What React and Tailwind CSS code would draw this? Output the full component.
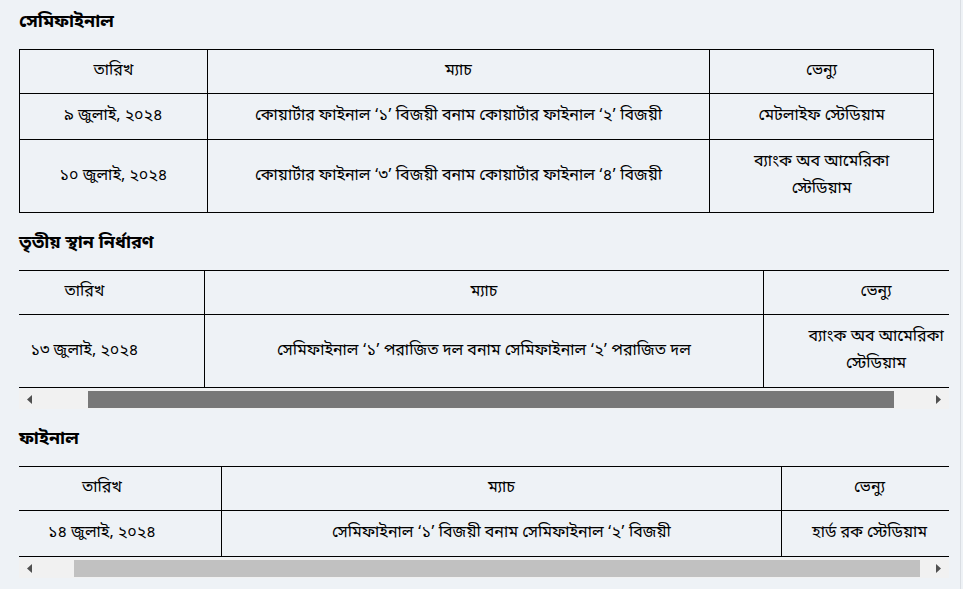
import { useCallback } from 'react';

const sections = [
  {
    title: 'সেমিফাইনাল',
    cols: [188, 503, 224],
    rows: [
      ['৯ জুলাই, ২০২৪', 'কোয়ার্টার ফাইনাল ‘১’ বিজয়ী বনাম কোয়ার্টার ফাইনাল ‘২’ বিজয়ী', 'মেটলাইফ স্টেডিয়াম'],
      ['১০ জুলাই, ২০২৪', 'কোয়ার্টার ফাইনাল ‘৩’ বিজয়ী বনাম কোয়ার্টার ফাইনাল ‘৪’ বিজয়ী', 'ব্যাংক অব আমেরিকা স্টেডিয়াম'],
    ],
  },
  {
    title: 'তৃতীয় স্থান নির্ধারণ',
    cols: [240, 560, 225],
    scroll: 55,
    thumb: 'bg-[#787878]',
    rows: [
      ['১৩ জুলাই, ২০২৪', 'সেমিফাইনাল ‘১’ পরাজিত দল বনাম সেমিফাইনাল ‘২’ পরাজিত দল', 'ব্যাংক অব আমেরিকা স্টেডিয়াম'],
    ],
  },
  {
    title: 'ফাইনাল',
    cols: [239, 561, 176],
    scroll: 37,
    thumb: 'bg-[#c1c1c1]',
    rows: [
      ['১৪ জুলাই, ২০২৪', 'সেমিফাইনাল ‘১’ বিজয়ী বনাম সেমিফাইনাল ‘২’ বিজয়ী', 'হার্ড রক স্টেডিয়াম'],
    ],
  },
];

const VIEW = 930;
const ARROW = 21;

function Scrollbar({ content, scroll, thumb }) {
  const track = VIEW - ARROW * 2;
  const width = Math.round((track * VIEW) / content);
  const left = Math.round((scroll / content) * track);
  return (
    <div className="flex h-[20px] bg-[#f1f1f1]">
      <div className="flex w-[21px] items-center justify-center">
        <svg width="5" height="9" viewBox="0 0 5 9"><polygon points="5,0 0,4.5 5,9" fill="#505050" /></svg>
      </div>
      <div className="flex-1 pt-[2px]">
        <div className={`h-[17px] ${thumb}`} style={{ marginLeft: left, width }} />
      </div>
      <div className="flex w-[21px] items-center justify-center">
        <svg width="5" height="9" viewBox="0 0 5 9"><polygon points="0,0 5,4.5 0,9" fill="#505050" /></svg>
      </div>
    </div>
  );
}

function Section({ s, first }) {
  const total = s.cols.reduce((a, b) => a + b, 0);
  const setScroll = useCallback((el) => {
    if (el && s.scroll) el.scrollLeft = s.scroll;
  }, [s.scroll]);

  return (
    <section>
      <h2 className={`${first ? 'pt-[8px] pb-[13px]' : 'pt-[16px] pb-[13px]'} text-[18px] font-bold leading-[28px] text-black`}>
        {s.title}
      </h2>
      <div ref={setScroll} className={s.scroll ? 'w-[930px] overflow-hidden' : ''}>
        <table className="border-collapse text-center text-[16px] leading-[27px] text-black" style={{ width: total }}>
          <colgroup>
            {s.cols.map((w, i) => <col key={i} style={{ width: w }} />)}
          </colgroup>
          <thead>
            <tr>
              {['তারিখ', 'ম্যাচ', 'ভেন্যু'].map((h) => (
                <th key={h} className="border border-black px-[10px] py-[8px] font-normal">{h}</th>
              ))}
            </tr>
          </thead>
          <tbody>
            {s.rows.map((r, i) => (
              <tr key={i}>
                {r.map((c, j) => (
                  <td key={j} className="border border-black px-[10px] py-[9px]">
                    {j === 2 ? <span className="mx-auto block max-w-[160px]">{c}</span> : c}
                  </td>
                ))}
              </tr>
            ))}
          </tbody>
        </table>
      </div>
      {s.scroll ? <div className="mt-px w-[930px]"><Scrollbar content={total} scroll={s.scroll} thumb={s.thumb} /></div> : null}
    </section>
  );
}

export default function App() {
  return (
    <div className="min-h-screen bg-[#eef2f6] font-['Noto_Sans_Bengali','Lohit_Bengali','FreeSerif','Noto_Sans',sans-serif]">
      <div className="min-h-screen w-[961px] border-r border-[#dadee3] px-[19px]">
        {sections.map((s, i) => <Section key={s.title} s={s} first={i === 0} />)}
      </div>
    </div>
  );
}
